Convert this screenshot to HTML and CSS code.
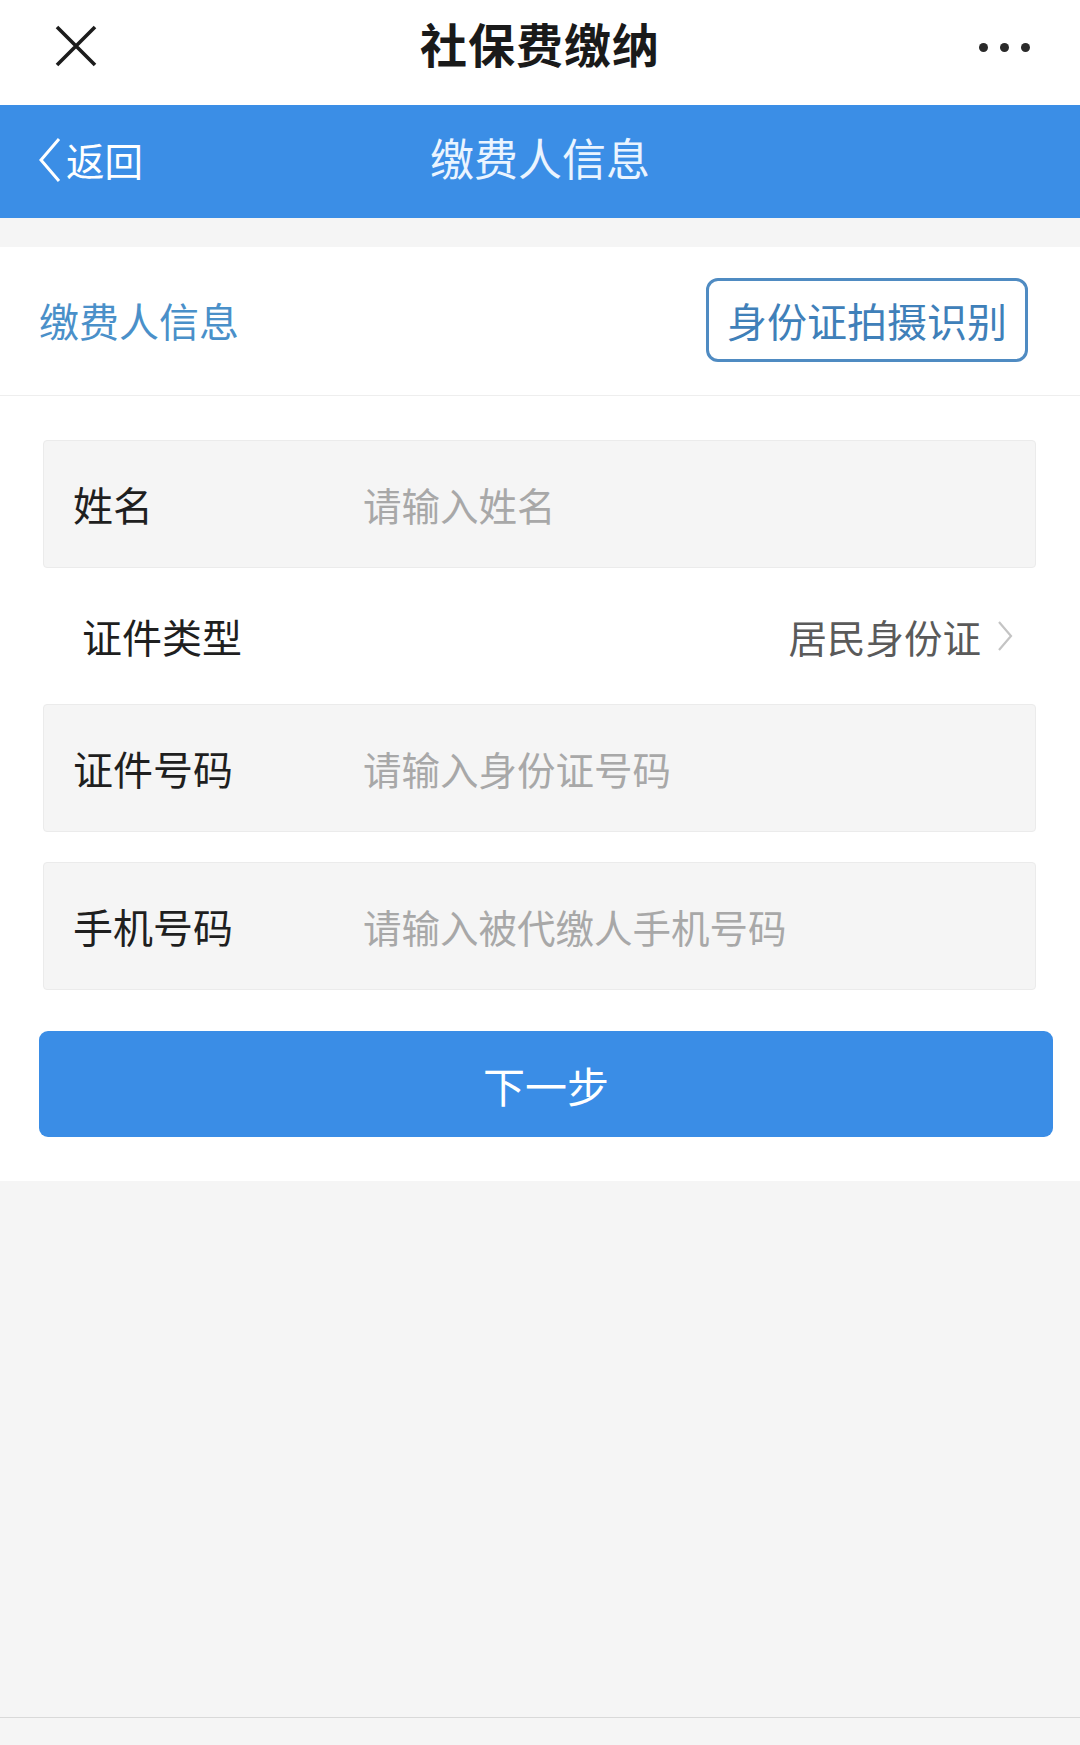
FILE: index.html
```html
<!DOCTYPE html>
<html lang="zh-CN">
<head>
<meta charset="utf-8">
<title>社保费缴纳</title>
<link rel="stylesheet" href="styles.css">
</head>
<body>
<div class="page">
  <header class="topbar">
    <svg class="close" width="42" height="42" viewBox="0 0 42 42"><path d="M2 2 L40 40 M40 2 L2 40" stroke="#1c1c1c" stroke-width="3.6" fill="none"/></svg>
    <div class="top-title">社保费缴纳</div>
    <div class="dots"><span></span><span></span><span></span></div>
  </header>
  <nav class="navbar">
    <div class="back">
      <svg class="back-icon" width="24" height="46" viewBox="0 0 24 46"><path d="M21 2 L3 23 L21 44" stroke="#ffffff" stroke-width="3" fill="none"/></svg>
      <span>返回</span>
    </div>
    <div class="nav-title">缴费人信息</div>
  </nav>
  <div class="gap"></div>
  <section class="card">
    <div class="card-head">
      <div class="card-title">缴费人信息</div>
      <button class="scan-btn">身份证拍摄识别</button>
    </div>
    <div class="form">
      <div class="field">
        <div class="label">姓名</div>
        <div class="placeholder">请输入姓名</div>
      </div>
      <div class="select-row">
        <div class="label">证件类型</div>
        <div class="select-value">居民身份证
          <svg class="chev" width="16" height="32" viewBox="0 0 16 32"><path d="M2 2 L14 16 L2 30" stroke="#c4c4c4" stroke-width="2.2" fill="none"/></svg>
        </div>
      </div>
      <div class="field">
        <div class="label">证件号码</div>
        <div class="placeholder">请输入身份证号码</div>
      </div>
      <div class="field field-last">
        <div class="label">手机号码</div>
        <div class="placeholder">请输入被代缴人手机号码</div>
      </div>
      <button class="next-btn">下一步</button>
    </div>
  </section>
  <div class="bottom">
    <div class="bottom-line"></div>
  </div>
</div>
</body>
</html>
```
FILE: styles.css
```css
* { box-sizing: border-box; }
html, body { margin: 0; padding: 0; }
body {
  background: #f5f5f5;
  font-family: "Noto Sans CJK SC", "Noto Sans", sans-serif;
  width: 1080px;
  height: 1745px;
  overflow: hidden;
}
.page { display: flex; flex-direction: column; height: 1745px; }

.topbar {
  height: 105px;
  background: #ffffff;
  display: flex;
  align-items: center;
  justify-content: space-between;
  padding: 0 50px 0 55px;
  position: relative;
}
.close { display: block; margin-top: -14px; }
.top-title {
  position: absolute;
  left: 0; right: 0;
  text-align: center;
  font-size: 47px;
  font-weight: 700;
  color: #1a1a1a;
  letter-spacing: 1px;
  top: 13px;
  line-height: 60px;
  pointer-events: none;
}
.dots { display: flex; gap: 12px; margin-top: -10px; }
.dots span { width: 9px; height: 9px; border-radius: 50%; background: #2a2a2a; display: block; }

.navbar {
  height: 113px;
  background: #3b8ee6;
  display: flex;
  align-items: center;
  position: relative;
  padding-left: 38px;
}
.back { display: flex; align-items: center; color: #ffffff; font-size: 38.5px; gap: 4px; margin-top: -4px; }
.back span { line-height: 50px; margin-top: -2px; }
.nav-title {
  position: absolute;
  left: 0; right: 0;
  text-align: center;
  font-size: 44px;
  color: #eaf4ff;
  line-height: 113px;
  top: -4px;
}

.gap { height: 29px; }

.card { background: #ffffff; }
.card-head {
  height: 149px;
  display: flex;
  align-items: center;
  justify-content: space-between;
  padding: 0 52px 0 39px;
  border-bottom: 1px solid #eeeeee;
}
.card-title { font-size: 40px; color: #4a90c9; margin-top: -2px; }
.scan-btn {
  width: 322px;
  height: 84px;
  border: 3px solid #4f8bc2;
  border-radius: 12px;
  background: #ffffff;
  color: #3f80b9;
  font-family: inherit;
  font-size: 40px;
  padding: 0;
  margin-top: -2px;
}

.form { padding: 44px 27px 44px 39px; display: flex; flex-direction: column; }
.field {
  margin: 0 17px 0 4px;
  height: 128px;
  background: #f5f5f5;
  border: 1px solid #ebebeb;
  border-radius: 4px;
  display: flex;
  align-items: center;
  padding-left: 29px;
}
.field .label { width: 290px; font-size: 40px; color: #1f1f1f; }
.placeholder { font-size: 38.5px; color: #a8a8a8; }
.field + .field { margin-top: 30px; }
.field-last { margin-bottom: 41px; }

.select-row {
  height: 136px;
  display: flex;
  align-items: center;
  justify-content: space-between;
  padding: 0 40px 0 43px;
}
.select-row .label { font-size: 40px; color: #1f1f1f; }
.select-value { display: flex; align-items: center; font-size: 38.5px; color: #5a5a5a; gap: 16px; }
.chev { display: block; }

.next-btn {
  height: 106px;
  width: 1014px;
  background: #3a8de6;
  border: none;
  border-radius: 9px;
  color: #ffffff;
  font-family: inherit;
  font-size: 42px;
  padding: 0;
}

.bottom { flex: 1; display: flex; flex-direction: column; justify-content: flex-end; padding-bottom: 27px; }
.bottom-line { height: 1px; background: #d9d9d9; }
```
